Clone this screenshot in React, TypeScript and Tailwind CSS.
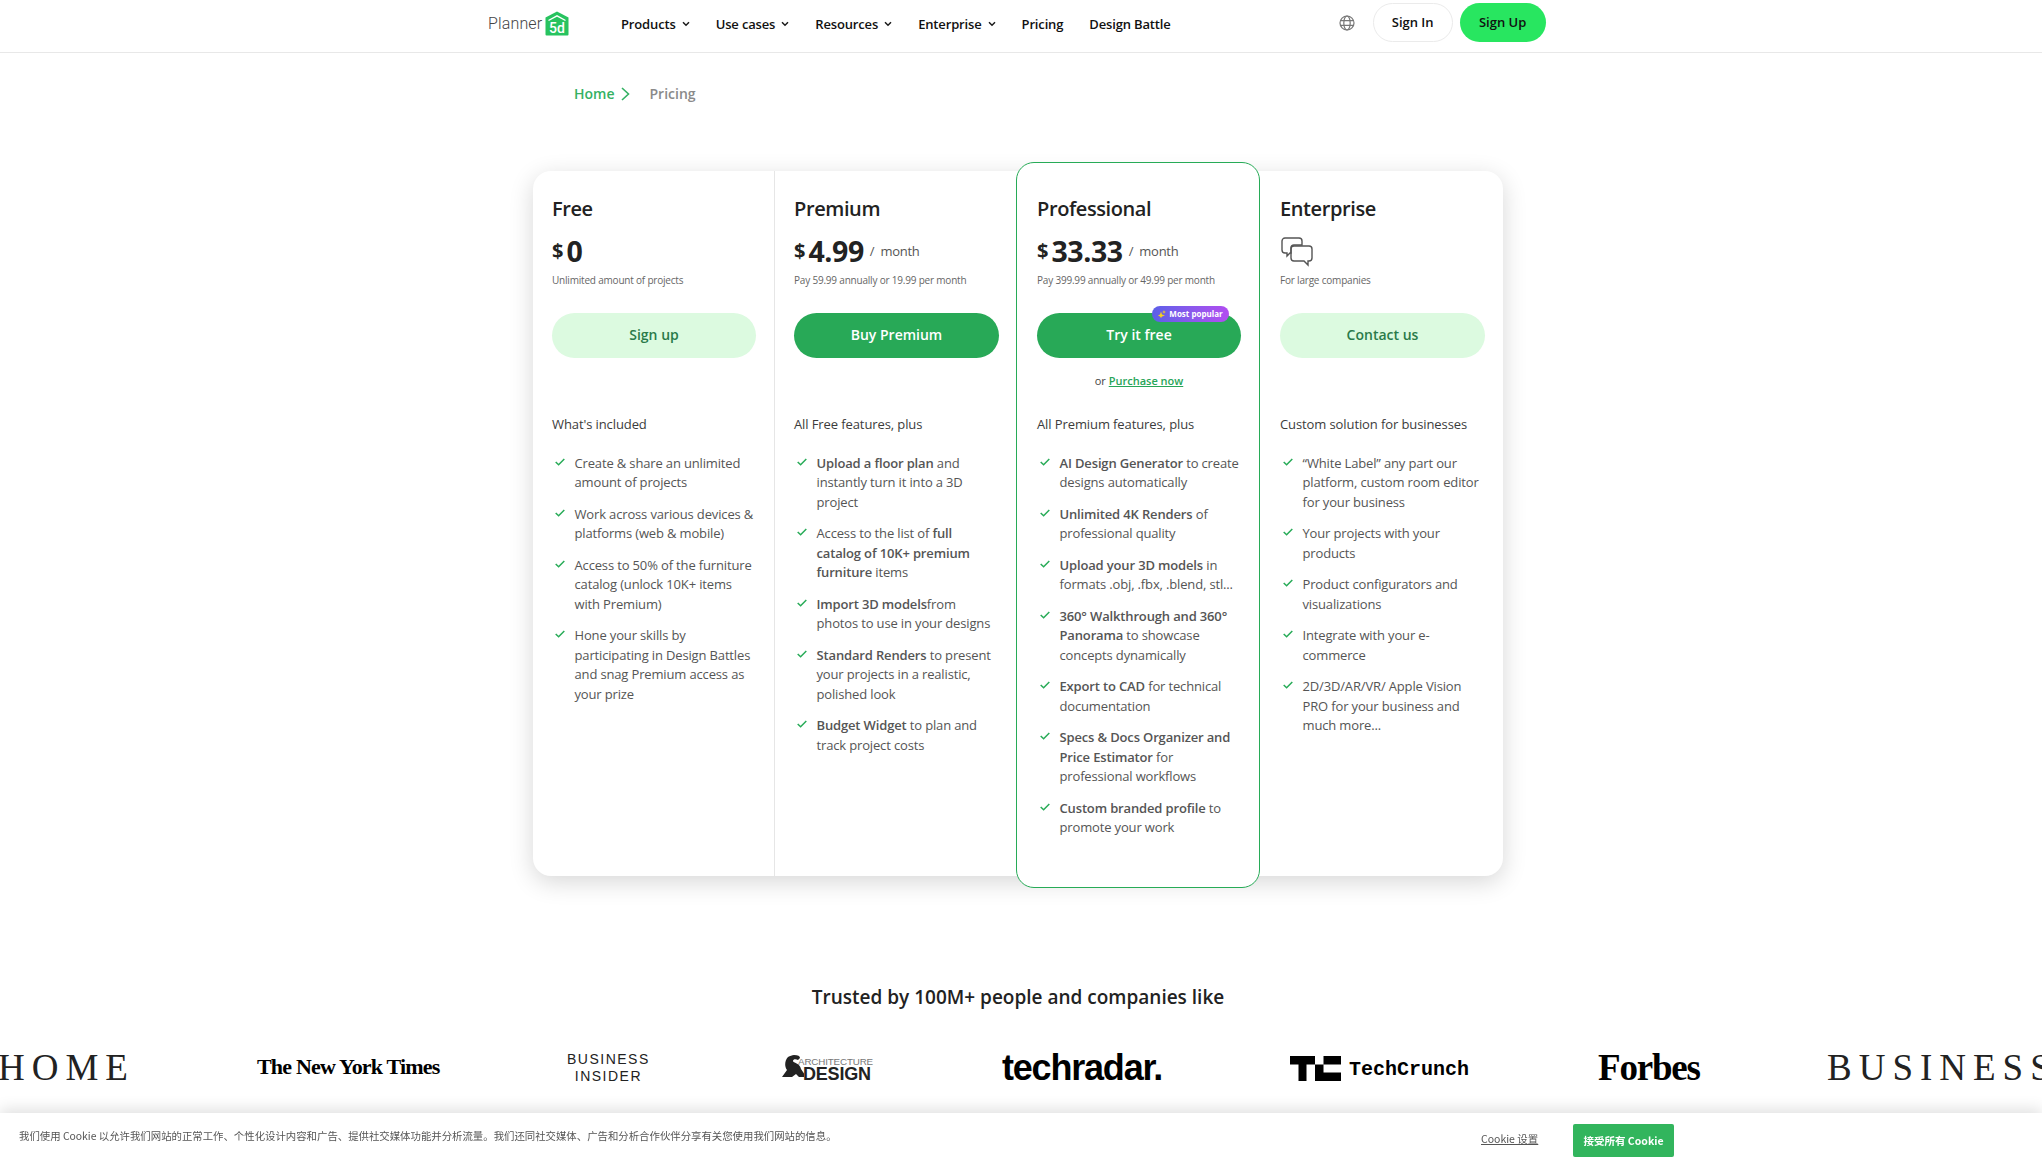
import React from "react";

type Seg = string | { b: string };
type Plan = {
  name: string;
  price?: string;
  per?: boolean;
  sub: string;
  cta: string;
  solid: boolean;
  head: string;
  items: Seg[][];
};

const plans: Plan[] = [
  {
    name: "Free",
    price: "0",
    sub: "Unlimited amount of projects",
    cta: "Sign up",
    solid: false,
    head: "What's included",
    items: [
      ["Create & share an unlimited amount of projects"],
      ["Work across various devices & platforms (web & mobile)"],
      ["Access to 50% of the furniture catalog (unlock 10K+ items with Premium)"],
      ["Hone your skills by participating in Design Battles and snag Premium access as your prize"],
    ],
  },
  {
    name: "Premium",
    price: "4.99",
    per: true,
    sub: "Pay 59.99 annually or 19.99 per month",
    cta: "Buy Premium",
    solid: true,
    head: "All Free features, plus",
    items: [
      [{ b: "Upload a floor plan" }, " and instantly turn it into a 3D project"],
      ["Access to the list of ", { b: "full catalog of 10K+ premium furniture" }, " items"],
      [{ b: "Import 3D models" }, "from photos to use in your designs"],
      [{ b: "Standard Renders" }, " to present your projects in a realistic, polished look"],
      [{ b: "Budget Widget" }, " to plan and track project costs"],
    ],
  },
  {
    name: "Professional",
    price: "33.33",
    per: true,
    sub: "Pay 399.99 annually or 49.99 per month",
    cta: "Try it free",
    solid: true,
    head: "All Premium features, plus",
    items: [
      [{ b: "AI Design Generator" }, " to create designs automatically"],
      [{ b: "Unlimited 4K Renders" }, " of professional quality"],
      [{ b: "Upload your 3D models" }, " in formats .obj, .fbx, .blend, stl..."],
      [{ b: "360° Walkthrough and 360° Panorama" }, " to showcase concepts dynamically"],
      [{ b: "Export to CAD" }, " for technical documentation"],
      [{ b: "Specs & Docs Organizer and Price Estimator" }, " for professional workflows"],
      [{ b: "Custom branded profile" }, " to promote your work"],
    ],
  },
  {
    name: "Enterprise",
    sub: "For large companies",
    cta: "Contact us",
    solid: false,
    head: "Custom solution for businesses",
    items: [
      ["“White Label” any part our platform, custom room editor for your business"],
      ["Your projects with your products"],
      ["Product configurators and visualizations"],
      ["Integrate with your e-commerce"],
      ["2D/3D/AR/VR/ Apple Vision PRO for your business and much more..."],
    ],
  },
];

function Chevron() {
  return (
    <svg width="8" height="6" viewBox="0 0 8 6" fill="none" stroke="#1a1a1a" strokeWidth="1.5" className="ml-[6px] -mt-[1px]">
      <path d="M1 1.2 4 4.2 7 1.2" />
    </svg>
  );
}

function Logo() {
  return (
    <div className="flex items-center w-[133px] -mt-[4px] ml-[3px]">
      <span className="text-[16px] text-[#444] font-['Roboto',sans-serif] font-light leading-none tracking-[0.15px]">Planner</span>
      <svg width="24" height="25" viewBox="0 0 24 25" className="ml-[3px] -mt-[2px]">
        <path d="M12 0.5 23.500 6.500V23.500a1 1 0 0 1-1 1H1.500a1 1 0 0 1-1-1V6.500Z" fill="#27c35f" />
        <path d="M3.500 9.500 12 4.800 20.500 9.500" fill="none" stroke="#fff" strokeWidth="1.4" />
        <text x="12" y="21.500" textAnchor="middle" fill="#fff" fontSize="14" fontWeight="500" fontFamily="Roboto, sans-serif">5d</text>
      </svg>
    </div>
  );
}

function Nav() {
  const items: [string, boolean][] = [
    ["Products", true],
    ["Use cases", true],
    ["Resources", true],
    ["Enterprise", true],
    ["Pricing", false],
    ["Design Battle", false],
  ];
  return (
    <header className="h-[53px] border-b border-[#e8e8e8] flex items-center pl-[485px]">
      <Logo />
      <nav className="flex items-center gap-[26px] text-[13px] tracking-[-0.15px] font-semibold text-[#111] -mt-[3px]">
        {items.map(([t, c]) => (
          <span key={t} className="flex items-center">
            {t}
            {c && <Chevron />}
          </span>
        ))}
      </nav>
      <svg width="16" height="16" viewBox="0 0 16 16" fill="none" stroke="#777" strokeWidth="1.2" className="ml-[168px] -mt-[6px]">
        <circle cx="8" cy="8" r="7" />
        <ellipse cx="8" cy="8" rx="3.2" ry="7" />
        <path d="M1 5.600h14M1 10.400h14" />
      </svg>
      <button className="ml-[18px] w-[80px] h-[39px] rounded-full border border-[#ebebeb] bg-white text-[13px] font-semibold text-[#111] -mt-[7px]">Sign In</button>
      <button className="ml-[7px] w-[86px] h-[39px] rounded-full bg-[#28e660] text-[13px] font-semibold text-[#111] -mt-[7px]">Sign Up</button>
    </header>
  );
}

function Check() {
  return (
    <svg width="10" height="8" viewBox="0 0 10 8" fill="none" stroke="#27ab57" strokeWidth="1.5" className="absolute left-[3px] top-[4px]">
      <path d="M0.700 4 3.600 6.800 9.300 1" />
    </svg>
  );
}

function ChatIcon() {
  return (
    <svg width="32" height="30" viewBox="0 0 32 30" fill="none" stroke="#555" strokeWidth="1.4" className="ml-[1px] mt-[1px]">
      <path d="M4 1h14a3 3 0 0 1 3 3v4H13a3 3 0 0 0-3 3v5H9l-3 3v-3H4a3 3 0 0 1-3-3V4a3 3 0 0 1 3-3Z" />
      <path d="M13 9h15a3 3 0 0 1 3 3v9a3 3 0 0 1-3 3h-1v4l-4-4H13a3 3 0 0 1-3-3v-9a3 3 0 0 1 3-3Z" />
    </svg>
  );
}

function Column({ plan, index }: { plan: Plan; index: number }) {
  const pro = plan.name === "Professional";
  const wrap = pro
    ? "relative z-10 -mt-[9px] -mb-[12px] pt-[32px] pl-[20px] pr-[18px] border border-[#27ab57] rounded-[18px] bg-white"
    : index === 0
      ? "pt-[24px] pl-[19px] pr-[18px] border-r border-[#e6e6e6]"
      : index === 1
        ? "pt-[24px] pl-[19px] pr-[17px]"
        : "pt-[24px] pl-[20px] pr-[18px]";
  return (
    <div className={wrap}>
      <h3 className="text-[20px] leading-[27px] tracking-[-0.4px] font-semibold text-[#222]">{plan.name}</h3>
      <div className="h-[44px] mt-[7px] flex items-center">
        {plan.price ? (
          <>
            <span className="text-[20px] font-bold text-[#222] mr-[3px]">$</span>
            <span className="text-[28.500px] tracking-[-0.4px] font-bold text-[#222] leading-none">{plan.price}</span>
            {plan.per && <span className="text-[13px] tracking-[-0.3px] text-[#555] ml-[6px] mt-[1px]">/&nbsp; month</span>}
          </>
        ) : (
          <ChatIcon />
        )}
      </div>
      <p className="text-[10px] tracking-[-0.2px] leading-[14px] text-[#666]">{plan.sub}</p>
      <div className="relative mt-[26px]">
        <button
          className={
            "w-full h-[45px] pb-[2px] rounded-full text-[14px] font-semibold " +
            (plan.solid ? "bg-[#28a957] text-white" : "bg-[#dcfae0] text-[#2a7a4a]")
          }
        >
          {plan.cta}
        </button>
        {pro && (
          <span className="absolute right-[12px] -top-[7px] h-[16px] w-[77px] rounded-full bg-gradient-to-r from-[#5b5fe8] to-[#b14cf0] text-white text-[8px] font-bold flex items-center justify-center gap-[3px]">
            <svg width="8" height="8" viewBox="0 0 8 8" fill="#f7d21c">
              <path d="M3 1.500 4 4.500 7 5.500 4 6.500 3 8 2 6.500 0 5.500 2 4.500ZM6 0 6.500 1.500 8 2 6.500 2.500 6 4 5.500 2.500 4 2 5.500 1.500Z" />
            </svg>
            Most popular
          </span>
        )}
      </div>
      <div className="h-[23px] mt-[11px] text-center text-[11px] leading-[23px] text-[#444]">
        {pro && (
          <>
            or <span className="text-[#27a558] font-semibold underline">Purchase now</span>
          </>
        )}
      </div>
      <h4 className="mt-[22px] text-[13px] tracking-[-0.1px] leading-[20px] font-medium text-[#3c3c3c]">{plan.head}</h4>
      <ul className="mt-[19.500px] flex flex-col gap-[12px]">
        {plan.items.map((segs, i) => (
          <li key={i} className="relative pl-[22.500px] text-[13px] tracking-[-0.15px] leading-[19.500px] text-[#555]">
            <Check />
            {segs.map((s, j) => (typeof s === "string" ? <span key={j}>{s}</span> : <b key={j} className="font-semibold">{s.b}</b>))}
          </li>
        ))}
      </ul>
    </div>
  );
}

function Logos() {
  return (
    <div className="mt-[28px] h-[60px] overflow-hidden whitespace-nowrap text-black relative w-full">
      <span className="absolute -left-[2px] top-[7px] font-['Liberation_Serif',serif] text-[37px] tracking-[7px] leading-[44px] text-[#222]">HOME</span>
      <span className="absolute left-[257px] top-[12px] font-['Liberation_Serif',serif] font-bold text-[22px] leading-[32px] tracking-[-0.8px]">The New York Times</span>
      <span className="absolute left-[567px] top-[12px] font-['Liberation_Sans',sans-serif] text-[14px] leading-[17px] tracking-[1.5px] text-center text-[#222]">
        BUSINESS<br />INSIDER
      </span>
      <svg width="22" height="23" viewBox="0 0 22 23" className="absolute left-[782px] top-[16px]">
        <path d="M12 0c4 0 6 1 6 3l-2 2c-2-1-5-1-5 1s7 2 8 8l4 6v2h-6l-3-3-4 3H0l5-7C2 11 3 5 6 2c2-1 4-2 6-2Z" fill="#222" />
      </svg>
      <span className="absolute left-[798px] top-[18px] font-['Liberation_Sans',sans-serif] text-[#222]">
        <span className="block text-[9.800px] leading-[10px] text-[#777] tracking-[-0.15px]">ARCHITECTURE</span>
        <span className="block text-[18px] leading-[15px] font-bold pl-[5px] tracking-[-0.2px]">DESIGN</span>
      </span>
      <span className="absolute left-[1002px] top-[9px] font-['Liberation_Sans',sans-serif] font-bold text-[36px] leading-[40px] tracking-[-1.2px]">techradar.</span>
      <svg width="51" height="25" viewBox="0 0 51 25" className="absolute left-[1290px] top-[17px]">
        <path d="M0 0h25v8.500h-8.500V25h-8V8.500H0ZM25 8.500h8.500V0H51v8.500H33.500v8H51V25H25Z" fill="#000" />
      </svg>
      <span className="absolute left-[1349px] top-[17px] font-['Liberation_Mono',monospace] font-bold text-[20px] leading-[28px]">TechCrunch</span>
      <span className="absolute left-[1598px] top-[8px] font-['Liberation_Serif',serif] font-bold text-[37px] leading-[42px] tracking-[-1.2px]">Forbes</span>
      <span className="absolute left-[1827px] top-[7px] font-['Liberation_Serif',serif] text-[37px] tracking-[7px] leading-[44px] text-[#222]">BUSINESS</span>
    </div>
  );
}

function CookieBar() {
  return (
    <div className="fixed left-0 right-0 bottom-0 h-[51px] bg-white shadow-[0_-4px_14px_rgba(0,0,0,0.12)] flex items-center font-['Noto_Sans_CJK_SC','Open_Sans',sans-serif]">
      <p className="ml-[19px] text-[10.400px] text-[#555] w-[1400px] -mt-[6px]">
        我们使用 Cookie 以允许我们网站的正常工作、个性化设计内容和广告、提供社交媒体功能并分析流量。我们还同社交媒体、广告和分析合作伙伴分享有关您使用我们网站的信息。
      </p>
      <span className="absolute left-[1481px] top-[18px] text-[10.500px] text-[#555] underline">Cookie 设置</span>
      <button className="absolute left-[1573px] top-[11px] w-[101px] h-[33px] rounded-[2px] bg-[#32b55d] text-white text-[10.500px] font-bold">接受所有 Cookie</button>
    </div>
  );
}

export default function App() {
  return (
    <div className="h-[1164px] overflow-hidden bg-white font-['Open_Sans',sans-serif] relative">
      <Nav />
      <div className="ml-[574px] mt-[31px] flex items-center text-[14px] leading-[20px] font-semibold">
        <span className="text-[#34b163]">Home</span>
        <svg width="9" height="14" viewBox="0 0 9 14" fill="none" stroke="#34b163" strokeWidth="1.6" className="ml-[6px]">
          <path d="M1 1 7.500 7 1 13" />
        </svg>
        <span className="ml-[20px] text-[#8a8a8a]">Pricing</span>
      </div>
      <div className="ml-[533px] mt-[67px] w-[970px] h-[705px] grid grid-cols-[242px_241px_244px_243px] rounded-[18px] bg-white shadow-[0_6px_24px_rgba(0,0,0,0.16)]">
        {plans.map((p, i) => (
          <Column key={p.name} plan={p} index={i} />
        ))}
      </div>
      <h2 className="mt-[107px] text-center text-[19px] leading-[28px] font-semibold text-[#222] pr-[6px]">Trusted by 100M+ people and companies like</h2>
      <Logos />
      <CookieBar />
    </div>
  );
}
